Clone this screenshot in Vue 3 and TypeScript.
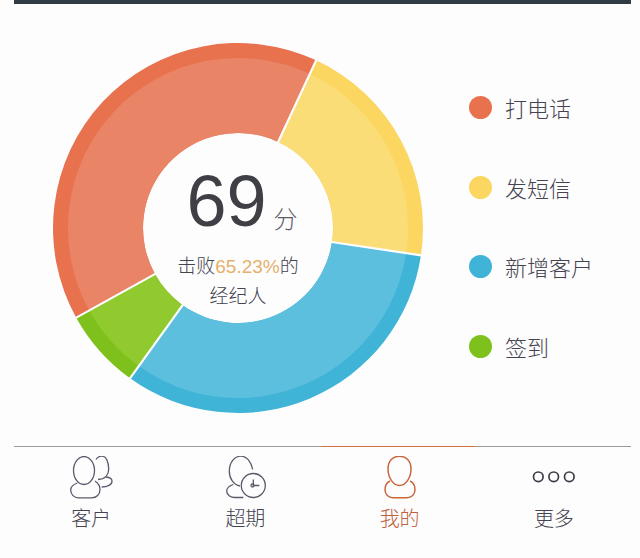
<script setup lang="ts">
const cx = 186
const cy = 186
const R = 185
const MID = 170
const r = 95

interface Slice { from: number; to: number; dark: string; light: string }

const slices: Slice[] = [
  { from: 241, to: 385, dark: '#e8714e', light: '#e98566' },
  { from: 25, to: 98.5, dark: '#fbd660', light: '#fbdd78' },
  { from: 98.5, to: 215.7, dark: '#40b4d6', light: '#5bbfdd' },
  { from: 215.7, to: 241, dark: '#7fc11c', light: '#90ca2e' },
]

function pt(radius: number, deg: number): string {
  const a = ((deg - 90) * Math.PI) / 180
  return `${(cx + radius * Math.cos(a)).toFixed(2)} ${(cy + radius * Math.sin(a)).toFixed(2)}`
}

function sector(outer: number, inner: number, from: number, to: number): string {
  const large = to - from > 180 ? 1 : 0
  return `M${pt(outer, from)}A${outer} ${outer} 0 ${large} 1 ${pt(outer, to)}L${pt(inner, to)}A${inner} ${inner} 0 ${large} 0 ${pt(inner, from)}Z`
}

function ray(deg: number): string {
  return `M${pt(r - 2, deg)}L${pt(R + 2, deg)}`
}

const legend = [
  { label: '打电话', color: '#e8714e' },
  { label: '发短信', color: '#fbd660' },
  { label: '新增客户', color: '#40b4d6' },
  { label: '签到', color: '#7fc11c' },
]
</script>

<template>
  <div class="page">
    <div class="topbar"></div>
    <main class="main">
      <div class="chart">
        <svg class="donut" width="372" height="372" viewBox="0 0 372 372">
          <g v-for="s in slices" :key="s.from">
            <path :d="sector(R, r, s.from, s.to)" :fill="s.dark" />
            <path :d="sector(MID, r, s.from, s.to)" :fill="s.light" />
          </g>
          <path v-for="s in slices" :key="'ray' + s.from" :d="ray(s.from)" stroke="#fdfdfe" stroke-width="2.2" />
        </svg>
        <div class="center">
          <div class="score"><span class="num">69</span><span class="unit">分</span></div>
          <div class="desc">击败<span class="pct">65.23%</span>的</div>
          <div class="desc">经纪人</div>
        </div>
      </div>
      <ul class="legend">
        <li v-for="item in legend" :key="item.label" class="legend-item">
          <span class="dot" :style="{ background: item.color }"></span>
          <span>{{ item.label }}</span>
        </li>
      </ul>
    </main>
    <nav class="tabs">
      <div class="tab">
        <svg class="icon" width="46" height="46" viewBox="0 0 46 46" fill="none" stroke="#5c5a6a" stroke-width="1.3">
          <ellipse cx="16" cy="14.500" rx="10.500" ry="14" />
          <path d="M28 3.500C29.500 1 32 .2 34 .2c4 0 6.700 5.500 6.700 13 0 5.500-3.500 10-10.700 10.300" />
          <path d="M38 21c3.500 .3 6 1.800 6 4.200 0 3.500-4.500 5.800-10.300 5.800" />
          <path d="M9.300 27C5 28.500 2.700 30.500 2.700 34c0 4.500 3.500 7.800 7.600 7.800h13.400c4.800 0 8.300-3.500 8.300-8.300 0-3.500-2-6.500-5-8.500" />
        </svg>
        <span>客户</span>
      </div>
      <div class="tab">
        <svg class="icon" width="46" height="46" viewBox="0 0 46 46" fill="none" stroke="#5c5a6a" stroke-width="1.3">
          <path d="M18 30C11.500 29 7.300 22.500 7.300 15.200 7.300 6.500 12.500.2 18.700.2c6 0 10.500 5.500 12 13.300" />
          <path d="M11.300 28.500C7 30 4.700 32 4.700 35c0 4 3.800 6.500 8.300 6.500h8.300" />
          <circle cx="31.300" cy="29.500" r="12" />
          <path d="M31.300 23.500v6h6" />
          <circle cx="30.500" cy="29.500" r="1.500" />
        </svg>
        <span>超期</span>
      </div>
      <div class="tab active">
        <svg class="icon" width="46" height="46" viewBox="0 0 46 46" fill="none" stroke="#c8663a" stroke-width="1.5">
          <path d="M22.500 .2C16 .2 11 5 11 13c0 9 5.500 16.500 11.500 16.500S34 22 34 13C34 5 29 .2 22.500 .2z" />
          <path d="M13 25c-3 1.500-5 4.500-5 8.500 0 5 3.500 8.300 8 8.300h14c4.500 0 8-3.300 8-8.300 0-4-2-7-5-8.500" />
        </svg>
        <span>我的</span>
      </div>
      <div class="tab">
        <svg class="icon" width="46" height="46" viewBox="0 0 46 46" fill="none" stroke="#3c3b48" stroke-width="1.7">
          <circle cx="7.300" cy="20.800" r="4.800" />
          <circle cx="22.700" cy="20.800" r="4.800" />
          <circle cx="38.300" cy="20.800" r="4.800" />
        </svg>
        <span>更多</span>
      </div>
    </nav>
  </div>
</template>

<style scoped>
.page {
  width: 640px;
  height: 558px;
  box-sizing: border-box;
  padding: 0 9px 0 14px;
  background: #fdfdfe;
  display: flex;
  flex-direction: column;
  font-family: "Noto Sans CJK SC", "Liberation Sans", sans-serif;
  font-weight: 300;
  color: #45434f;
  overflow: hidden;
}
.topbar {
  height: 4px;
  flex: none;
  background: #2f3c45;
}
.main {
  flex: none;
  height: 442px;
  display: flex;
  align-items: flex-start;
}
.chart {
  position: relative;
  flex: none;
  width: 372px;
  height: 372px;
  margin: 38px 0 0 38px;
}
.donut {
  display: block;
}
.center {
  position: absolute;
  inset: 0;
  display: flex;
  flex-direction: column;
  align-items: center;
  padding-top: 119px;
  box-sizing: border-box;
}
.score {
  height: 90px;
  display: flex;
  align-items: flex-start;
  padding-left: 8px;
  line-height: 80px;
}
.num {
  font-family: "Liberation Sans", sans-serif;
  font-weight: 400;
  font-size: 72px;
  color: #3f3f46;
}
.unit {
  margin: 45px 0 0 7px;
  font-size: 24px;
  line-height: 24px;
  color: #5d5b66;
}
.desc {
  font-size: 19px;
  line-height: 28px;
  color: #45434f;
}
.pct {
  font-family: "Liberation Sans", sans-serif;
  font-size: 19px;
  color: #e6b06a;
}
.legend {
  list-style: none;
  margin: 0;
  padding: 87px 0 0 45px;
  display: flex;
  flex-direction: column;
  gap: 46.500px;
}
.legend-item {
  height: 33px;
  display: flex;
  align-items: center;
  gap: 13px;
  font-size: 22px;
  line-height: 33px;
  white-space: nowrap;
}
.dot {
  width: 23px;
  height: 23px;
  border-radius: 50%;
  flex: none;
}
.tabs {
  flex: none;
  display: grid;
  grid-template-columns: repeat(4, 1fr);
  border-top: 1.500px solid #9a99a0;
}
.tab {
  position: relative;
  display: flex;
  flex-direction: column;
  align-items: center;
  padding-top: 9px;
  font-size: 20px;
  line-height: 28px;
}
.icon {
  display: block;
  margin-bottom: 2px;
}
.active {
  color: #c0603c;
}
.active::before {
  content: "";
  position: absolute;
  left: -2px;
  right: 2px;
  top: -1.500px;
  height: 1.500px;
  background: #d2703f;
}
</style>
